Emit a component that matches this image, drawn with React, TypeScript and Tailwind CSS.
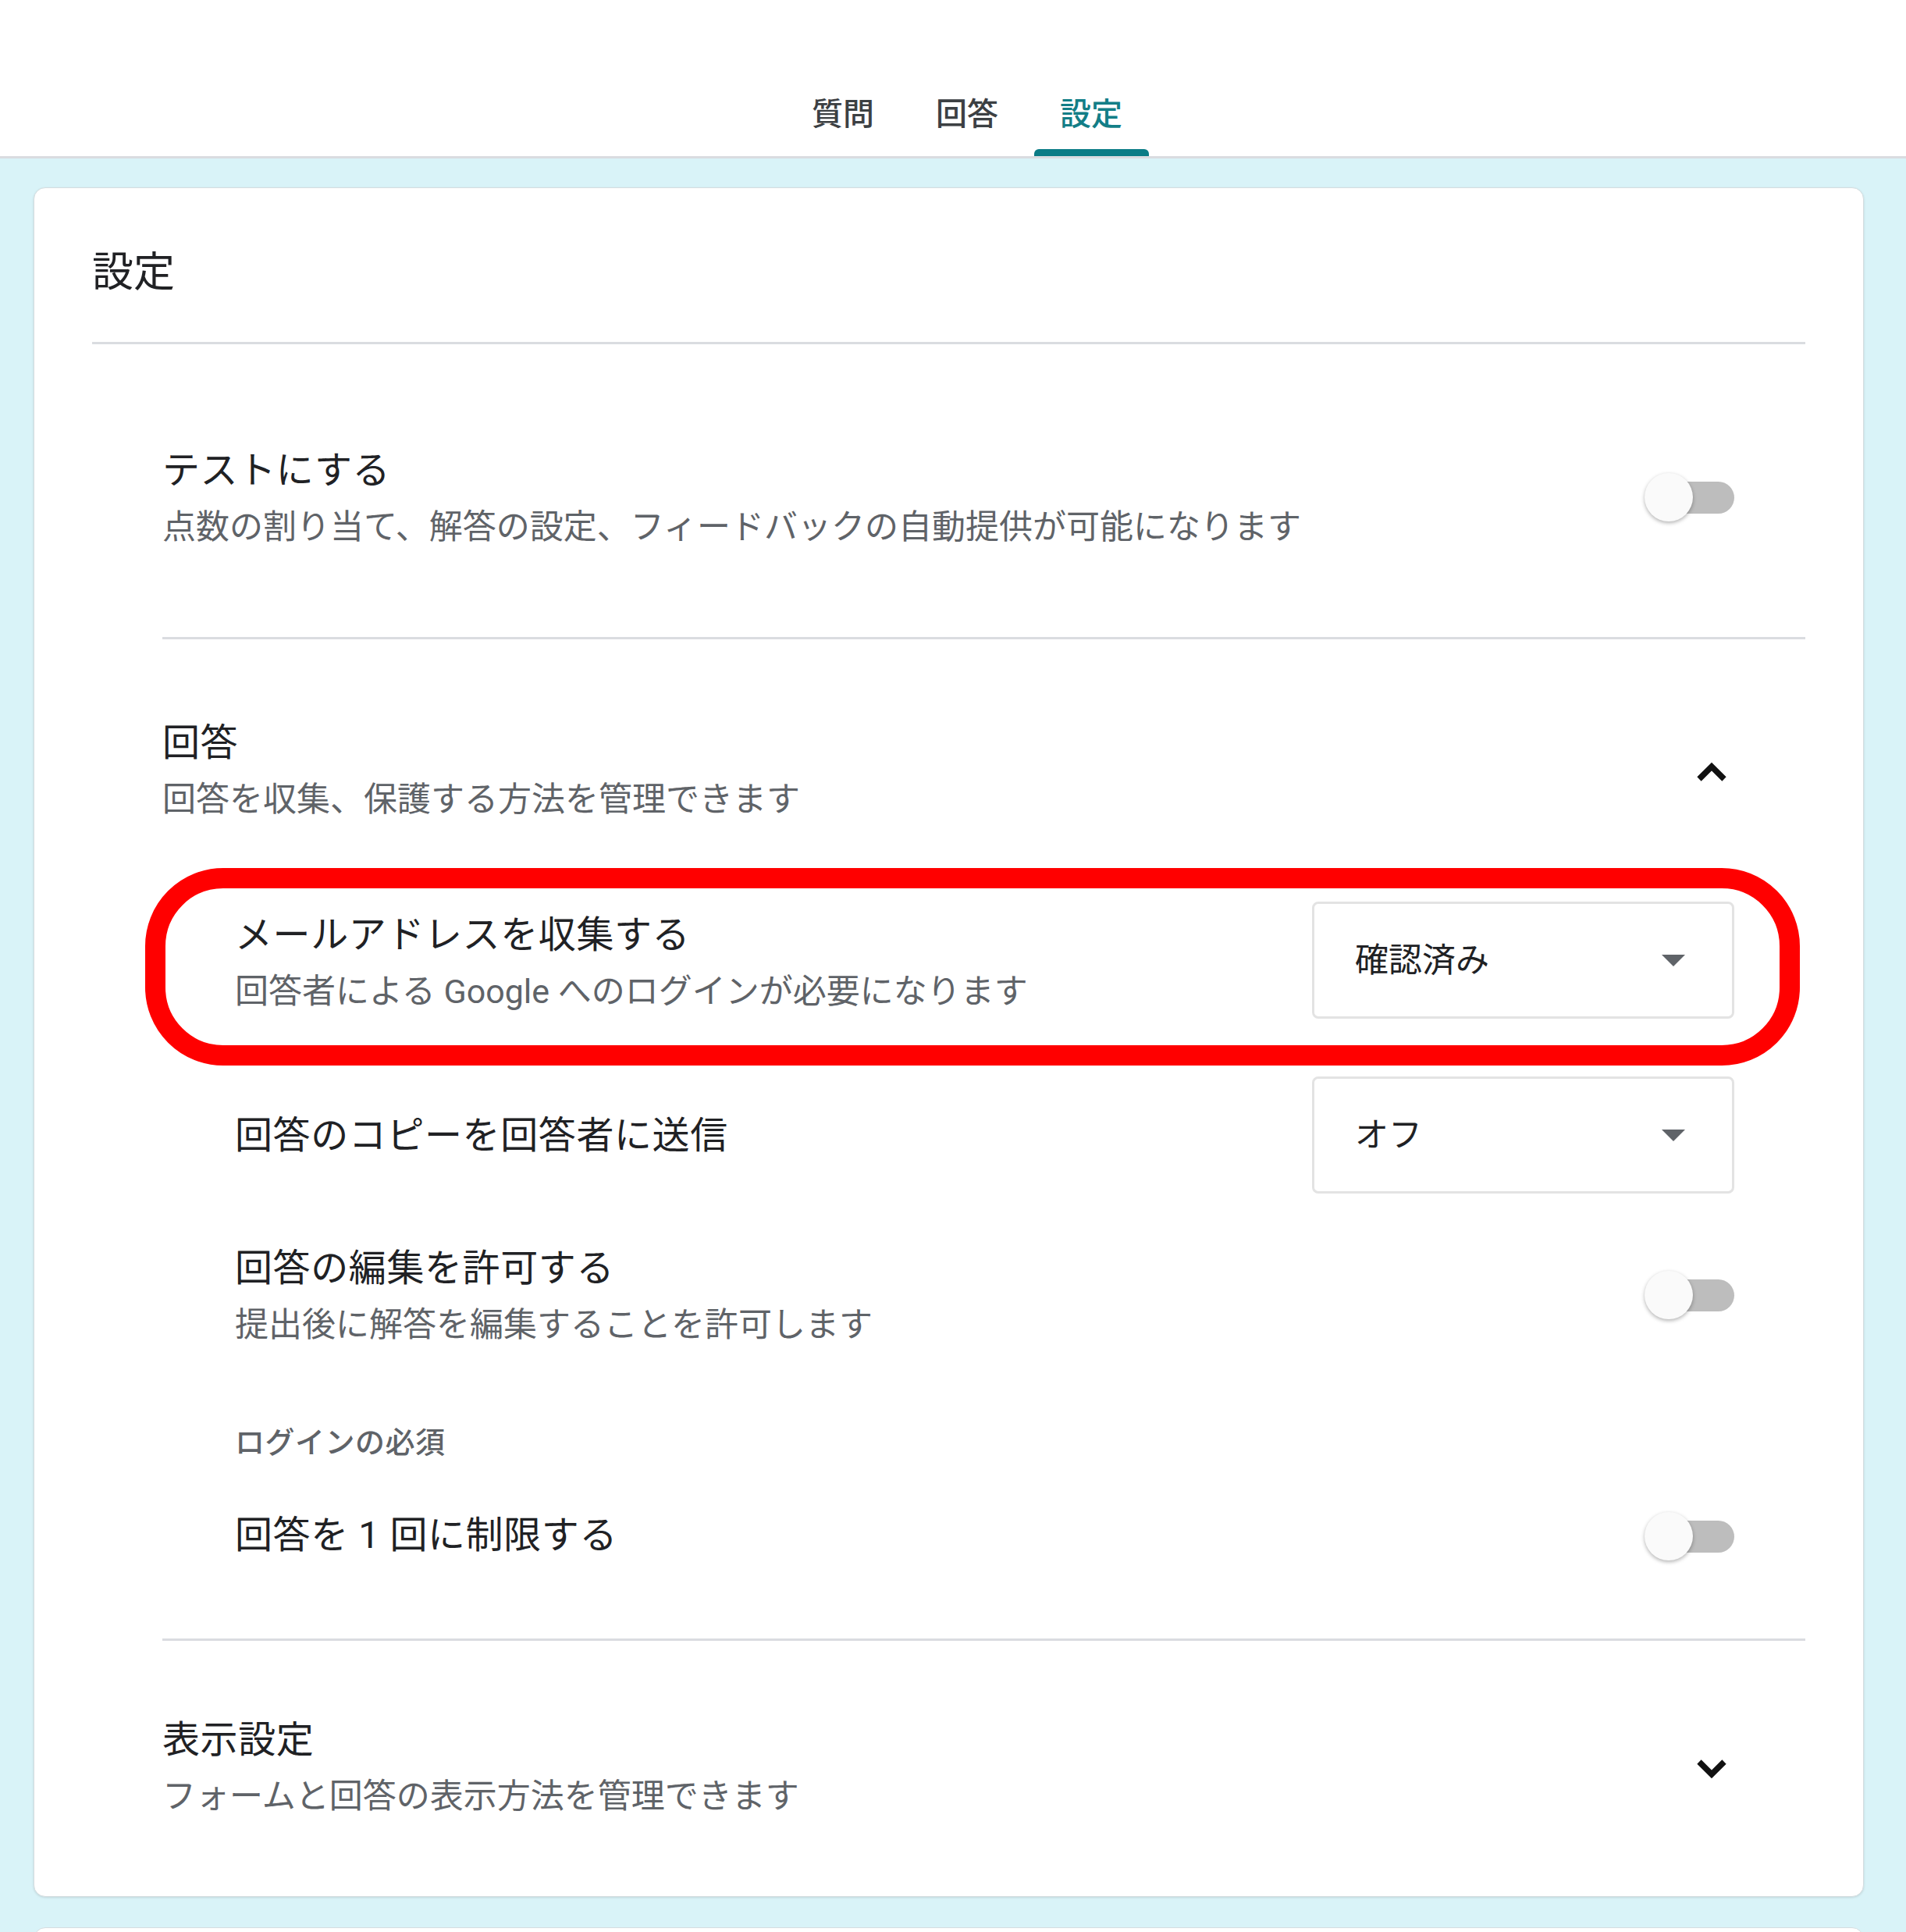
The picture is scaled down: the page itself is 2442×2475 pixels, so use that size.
import { useState } from "react";

type ToggleProps = { on?: boolean };

function Toggle({ on = false }: ToggleProps) {
  return (
    <div className="relative w-[108px] h-[41px] shrink-0 mt-[4px]">
      <div className={`w-full h-full rounded-full ${on ? "bg-[#8ccfd6]" : "bg-[#bdbdbd]"}`} />
      <div className="absolute left-[-7px] top-[-11px] w-[62px] h-[62px] rounded-full bg-[#fafafa] shadow-[0_2px_5px_rgba(0,0,0,0.3)]" />
    </div>
  );
}

function Chevron({ up }: { up: boolean }) {
  return (
    <svg width="40" height="26" viewBox="0 0 40 26" className="shrink-0">
      <polyline
        points={up ? "4,22 20,6 36,22" : "4,4 20,20 36,4"}
        fill="none"
        stroke="#111"
        strokeWidth="7.5"
      />
    </svg>
  );
}

function Dropdown({ value }: { value: string }) {
  return (
    <div className="w-[541px] h-[150px] shrink-0 flex items-center justify-between pl-[52px] pr-[60px] border-[3px] border-[#e3e3e3] rounded-[8px] bg-white">
      <span className="text-[43px] leading-[60px] text-[#202124]">{value}</span>
      <svg width="30" height="15" viewBox="0 0 30 15">
        <polygon points="0,0 30,0 15,15" fill="#5f6368" />
      </svg>
    </div>
  );
}

function SettingText({ title, sub }: { title: string; sub?: string }) {
  return (
    <div className="flex flex-col">
      <span className="text-[48px] leading-[73px] tracking-[0.6px] text-[#202124]">{title}</span>
      {sub && <span className="mt-[6px] text-[43px] leading-[60px] text-[#5f6368]">{sub}</span>}
    </div>
  );
}

export default function App() {
  const [tab] = useState("設定");
  const tabs = ["質問", "回答", "設定"];

  return (
    <div className="h-[2475px] overflow-hidden bg-[#d9f3f8] font-['Roboto','Noto_Sans_CJK_JP',sans-serif]">
      {/* top bar with tabs */}
      <div className="h-[203px] bg-white border-b-[3px] border-[#dadce0] flex items-end justify-center pl-[36px] gap-[12px]">
        {tabs.map((t) => (
          <div key={t} className="w-[147px] flex flex-col items-center">
            <span
              className={`text-[40px] leading-[60px] font-medium ${t === tab ? "text-[#137e87]" : "text-[#3c4043]"}`}
            >
              {t}
            </span>
            <div className={`mt-[14px] w-full h-[9px] rounded-t-[6px] ${t === tab ? "bg-[#0b7c86]" : "bg-transparent"}`} />
          </div>
        ))}
      </div>

      {/* settings card */}
      <div className="mt-[37px] ml-[43px] w-[2345px] bg-white rounded-[15px] border border-[#d5dde0] shadow-[0_1px_3px_rgba(0,0,0,0.12)] px-[74px] pt-[72px] pb-[98px]">
        <div className="text-[53px] leading-[72px] text-[#202124]">設定</div>
        <div className="mt-[53px] h-[3px] bg-[#dadce0]" />

        {/* テスト */}
        <div className="ml-[90px] border-b-[3px] border-[#dadce0] pt-[125px] pb-[111px] pr-[91px] flex items-center justify-between">
          <SettingText title="テストにする" sub="点数の割り当て、解答の設定、フィードバックの自動提供が可能になります" />
          <Toggle />
        </div>

        {/* 回答 */}
        <div className="ml-[90px] border-b-[3px] border-[#dadce0] pt-[96px] pb-[96px] pr-[91px]">
          <div className="flex items-center justify-between">
            <SettingText title="回答" sub="回答を収集、保護する方法を管理できます" />
            <div className="mr-[9px] mt-[8px]">
              <Chevron up />
            </div>
          </div>

          <div className="pl-[93px]">
            <div className="relative mt-[101px] flex items-center justify-between">
              <SettingText title="メールアドレスを収集する" sub="回答者による Google へのログインが必要になります" />
              <Dropdown value="確認済み" />
              <div className="absolute left-[-115px] right-[-84px] top-[-43px] bottom-[-60px] border-[26px] border-[#ff0000] rounded-[100px] pointer-events-none" />
            </div>

            <div className="mt-[74px] flex items-center justify-between">
              <SettingText title="回答のコピーを回答者に送信" />
              <Dropdown value="オフ" />
            </div>

            <div className="mt-[59px] flex items-center justify-between">
              <SettingText title="回答の編集を許可する" sub="提出後に解答を編集することを許可します" />
              <Toggle />
            </div>

            <div className="mt-[96px] text-[38px] leading-[50px] tracking-[0.5px] font-medium text-[#5f6368]">ログインの必須</div>

            <div className="mt-[57px] flex items-center justify-between">
              <SettingText title="回答を 1 回に制限する" />
              <Toggle />
            </div>
          </div>
        </div>

        {/* 表示設定 */}
        <div className="ml-[90px] pt-[90px] pr-[91px] flex items-center justify-between">
          <SettingText title="表示設定" sub="フォームと回答の表示方法を管理できます" />
          <div className="mr-[9px] mt-[8px]">
            <Chevron up={false} />
          </div>
        </div>
      </div>

      {/* next card peeking in */}
      <div className="mt-[39px] ml-[43px] w-[2345px] h-[200px] bg-white rounded-t-[15px] border border-[#d5dde0]" />
    </div>
  );
}
